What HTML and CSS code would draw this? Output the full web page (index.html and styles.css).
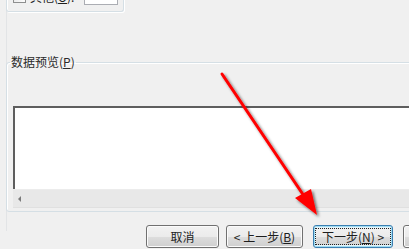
FILE: index.html
```html
<!DOCTYPE html>
<html lang="zh-CN">
<head>
<meta charset="utf-8">
<title>文本导入向导</title>
<link rel="stylesheet" href="styles.css">
</head>
<body>
<div class="panel">
  <div class="top-group">
    <span class="check"></span>
    <span class="lbl">其他(<u>O</u>):</span>
    <span class="textbox"></span>
  </div>
  <fieldset class="preview">
    <legend>数据预览(<u>P</u>)</legend>
    <div class="listbox">
      <div class="list-area"></div>
      <div class="hscroll"><span class="arrow-left"></span></div>
    </div>
  </fieldset>
  <div class="buttons">
    <button class="btn w-cancel">取消</button>
    <button class="btn w-prev">&lt; 上一步(<u>B</u>)</button>
    <button class="btn w-next default"><span class="focus">下一步(<u>N</u>) &gt;</span></button>
    <button class="btn w-finish">完成(<u>F</u>)</button>
  </div>
</div>
<svg class="annot" width="409" height="249" viewBox="0 0 409 249">
  <defs>
    <filter id="sh" x="-20%" y="-20%" width="140%" height="140%">
      <feGaussianBlur in="SourceAlpha" stdDeviation="1.6"/>
      <feOffset dx="2" dy="2" result="b"/>
      <feComponentTransfer><feFuncA type="linear" slope="0.55"/></feComponentTransfer>
      <feMerge><feMergeNode/><feMergeNode in="SourceGraphic"/></feMerge>
    </filter>
  </defs>
  <g filter="url(#sh)">
    <line x1="222" y1="74" x2="304" y2="196" stroke="#ff0000" stroke-width="3" stroke-linecap="round"/>
    <polygon points="317,215 295,198 311,189" fill="#ff0000"/>
  </g>
</svg>
</body>
</html>
```

FILE: styles.css
```css
html, body {
  margin: 0;
  padding: 0;
  width: 409px;
  height: 249px;
  overflow: hidden;
  background: #f0f0f0;
  font-family: "Noto Sans CJK SC", "Noto Sans", sans-serif;
  font-size: 12px;
  color: #1e1e1e;
}

.panel {
  margin-left: 6px;
  height: 249px;
  border-left: 1px solid #e2e4e6;
  box-sizing: border-box;
}

.top-group {
  margin-top: -18px;
  margin-left: -1px;
  width: 118px;
  height: 30px;
  box-sizing: border-box;
  border: 1px solid #d5dfe5;
  border-top: none;
  border-radius: 0 0 3px 3px;
  box-shadow: inset 1px 0 0 #fff, 1px 1px 0 #fff;
  display: flex;
  align-items: flex-end;
  padding: 0 0 6px 6px;
}

.check {
  width: 11px;
  height: 11px;
  border: 1px solid #8e8f8f;
  background: linear-gradient(135deg, #dcdcdc, #fefefe);
  margin-bottom: 2px;
}

.lbl {
  margin-left: 4px;
  line-height: 14px;
  height: 14px;
  margin-bottom: 1px;
  color: #1e1e1e;
}

.lbl u { text-decoration: underline; }

.textbox {
  margin-left: 10px;
  width: 32px;
  height: 18px;
  background: #fff;
  border: 1px solid #abadb3;
  border-top-color: #e3e9ef;
}

.preview {
  margin: 43px 0 0 -1px;
  padding: 37px 0 3px 6px;
  width: 430px;
  border: 1px solid #d5dfe5;
  border-radius: 3px;
  box-shadow: inset 1px 1px 0 #fff;
  box-sizing: border-box;
}

.preview legend {
  padding: 0 1px;
  margin-left: -3px;
  line-height: 14px;
  font-size: 12px;
  color: #2a2a2a;
}

.listbox {
  display: flex;
  flex-direction: column;
}

.list-area {
  height: 81px;
  background: #fff;
  border-top: 2px solid #5e5e5e;
  border-left: 2px solid #5e5e5e;
}

.hscroll {
  height: 17px;
  background: #e8e8e8;
  border-top: 1px solid #ececec;
  border-bottom: 1px solid #e0e0e0;
  display: flex;
  align-items: center;
  padding-left: 5px;
}

.arrow-left {
  width: 0;
  height: 0;
  border-top: 3px solid transparent;
  border-bottom: 3px solid transparent;
  border-right: 3px solid #7a7a7a;
}

.buttons {
  display: flex;
  margin-top: 13px;
  padding-left: 139px;
}

.btn {
  height: 23px;
  flex: none;
  box-sizing: border-box;
  border: 1px solid #707070;
  border-radius: 3px;
  background: linear-gradient(#f2f2f2 0%, #ebebeb 50%, #dddddd 51%, #cfcfcf 100%);
  box-shadow: inset 0 0 0 1px #fbfbfb;
  font-family: "Noto Sans CJK SC", "Noto Sans", sans-serif;
  font-size: 12px;
  color: #1e1e1e;
  padding: 0;
  line-height: 19px;
  display: flex;
  align-items: center;
  justify-content: center;
}

.w-cancel { width: 73px; }
.w-prev { width: 77px; margin-left: 7px; }
.w-next { width: 80px; margin-left: 10px; }
.w-finish { width: 75px; margin-left: 10px; }

.btn.default {
  border-color: #3c7fb1;
  box-shadow: inset 0 0 0 1px #9fdcf3, inset 0 0 0 2px #e6f4fb;
}

.focus {
  border: 1px dotted #222;
  padding: 0 3px;
  line-height: 15px;
  height: 15px;
  display: block;
  width: 68px;
  text-align: center;
}

.annot {
  position: absolute;
  left: 0;
  top: 0;
  pointer-events: none;
}
```
